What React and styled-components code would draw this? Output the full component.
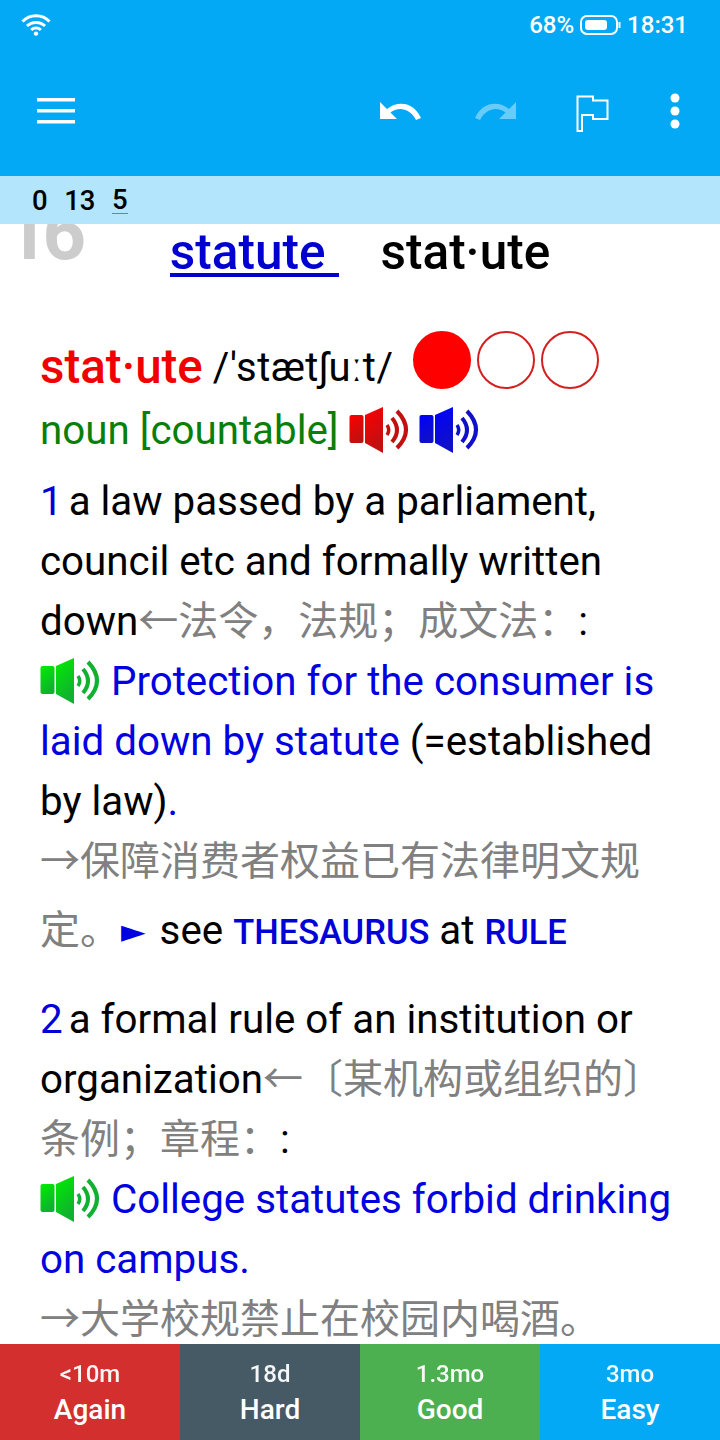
import React from 'react';
import styled, { createGlobalStyle } from 'styled-components';

const GlobalStyle = createGlobalStyle`
    html, body {
        margin: 0;
        padding: 0;
        background: #fff;
        font-family: Roboto, "Noto Sans CJK SC", sans-serif;
    }
`;

const Page = styled.div`
    width: 720px;
    height: 1440px;
    display: flex;
    flex-direction: column;
    overflow: hidden;
    background: #fff;
`;

const Header = styled.header`
    height: 176px;
    background: #03a9f4;
    flex-shrink: 0;
    color: #fff;
`;

const StatusBar = styled.div`
    height: 50px;
    display: flex;
    align-items: center;
    justify-content: space-between;
    padding: 0 32px 0 21px;
    font-size: 24px;
    font-weight: 500;
`;

const StatusRight = styled.div`
    display: flex;
    align-items: center;
    gap: 6px;
`;

const Toolbar = styled.div`
    height: 122px;
    display: flex;
    align-items: center;
    padding: 0 36px 0 37px;
`;

const ToolIcon = styled.svg`
    display: block;
    flex-shrink: 0;
    margin-left: ${p => p.$gap || 0}px;
    margin-top: ${p => p.$top || 0}px;
`;

const Counts = styled.div`
    height: 48px;
    flex-shrink: 0;
    background: #b3e5fc;
    display: flex;
    align-items: center;
    gap: 16.5px;
    padding-left: 32px;
    font-size: 27.5px;
    font-weight: 500;
    color: #000;
    position: relative;
    z-index: 1;
`;

const Due = styled.span`
    border-bottom: ${p => (p.$underline ? '1px solid #35b04a' : 'none')};
    line-height: 27px;
`;

const Content = styled.main`
    flex: 1;
    min-height: 0;
    overflow: hidden;
    position: relative;
    padding: 0 40px 0 40px;
    color: #000;
    font-size: 40.3px;
`;

const CardNumber = styled.div`
    position: absolute;
    left: 5px;
    top: -23px;
    font-size: 76px;
    line-height: 64px;
    font-weight: 700;
    letter-spacing: -6px;
    color: #ccc;
`;

const TitleRow = styled.div`
    height: 56px;
    display: flex;
    justify-content: center;
    align-items: baseline;
    gap: 41px;
    font-size: 49.5px;
    font-weight: 500;
    line-height: 56px;
    margin-bottom: 50px;
`;

const TitleLink = styled.span`
    color: #0000d0;
    border-bottom: 4px solid #0000d0;
    line-height: 42px;
    padding-right: 14px;
`;

const HeadRow = styled.div`
    height: 60px;
    display: flex;
    align-items: center;
    gap: 10px;
`;

const Headword = styled.span`
    color: #f00000;
    font-size: 47.5px;
    font-weight: 500;
    margin-top: 14px;
`;

const Pron = styled.span`
    font-size: 40px;
    letter-spacing: 0.6px;
    margin: 14px 9px 0 0;
`;

const Circles = styled.div`
    display: flex;
    gap: 6px;
`;

const Circle = styled.span`
    width: 58px;
    height: 58px;
    box-sizing: border-box;
    border-radius: 50%;
    border: 2px solid ${p => (p.$filled ? '#f00' : '#d32020')};
    background: ${p => (p.$filled ? '#f00' : 'transparent')};
`;

const PosRow = styled.div`
    height: 60px;
    display: flex;
    align-items: center;
    gap: 10px;
    margin: 10px 0 12px;
    color: #087f08;
`;

const Sense = styled.div`
    line-height: 60px;
    margin-top: ${p => p.$before || 0}px;
`;

const Num = styled.span`
    color: #0000d8;
    margin-right: 6px;
`;

const Zh = styled.span`
    color: #808080;
    font-family: "Noto Sans CJK SC", sans-serif;
    font-size: 40px;
    line-height: 1;
`;

const Example = styled.span`
    color: #0000e0;
`;

const Xref = styled.span`
    color: #0000d8;
    font-size: 34.5px;
    font-weight: 500;
`;

const Pointer = styled.span`
    color: #0000e0;
    font-family: "DejaVu Sans", sans-serif;
    font-size: 32px;
    line-height: 1;
    margin: 0 14px 0 1px;
    vertical-align: 2px;
`;

const TallLine = styled.div`
    height: 78px;
    line-height: 78px;
`;

const Speaker = styled.svg`
    display: ${p => (p.$inline ? 'inline-block' : 'block')};
    vertical-align: -9px;
    margin-right: ${p => (p.$inline ? 11 : 0)}px;
    filter: blur(0.7px);
`;

const AnswerBar = styled.footer`
    height: 96px;
    flex-shrink: 0;
    display: grid;
    grid-template-columns: repeat(4, 1fr);
`;

const Answer = styled.button`
    border: 0;
    padding: 14px 0 0;
    margin: 0;
    background: ${p => p.$bg};
    color: #fff;
    font-family: inherit;
    display: flex;
    flex-direction: column;
    align-items: center;
    font-weight: 500;
    span {
        font-size: 24px;
        line-height: 32px;
        opacity: 0.95;
    }
    strong {
        font-size: 28px;
        line-height: 40px;
        font-weight: 500;
    }
`;

function Wifi() {
    return (
        <svg width="30" height="22" viewBox="0 0 30 22" fill="none" stroke="#fff" strokeWidth="3">
            <path d="M1.5 7.5a19 19 0 0 1 27 0" />
            <path d="M6 12a13 13 0 0 1 18 0" />
            <path d="M10.2 16a7 7 0 0 1 9.6 0" />
            <circle cx="15" cy="19.6" r="2.2" fill="#fff" stroke="none" />
        </svg>
    );
}

function Battery() {
    return (
        <svg width="41" height="20" viewBox="0 0 41 20" fill="none">
            <rect x="1" y="1" width="36" height="18" rx="6" stroke="#fff" strokeWidth="2" />
            <rect x="5" y="5" width="22" height="10" rx="3" fill="#fff" />
            <path d="M39.5 7v6" stroke="#fff" strokeWidth="2" />
        </svg>
    );
}

function SpeakerIcon({ id, light, dark, inline }) {
    return (
        <Speaker $inline={inline} width="60" height="46" viewBox="0 0 60 46" fill="none">
            <defs>
                <linearGradient id={id} x1="0" y1="0" x2="0.4" y2="1">
                    <stop offset="0" stopColor={light} />
                    <stop offset="1" stopColor={dark} />
                </linearGradient>
            </defs>
            <rect x="0.5" y="8" width="14" height="28" rx="2" fill={`url(#${id})`} />
            <path d="M16 8 L34 0 V46 L16 36 Z" fill={`url(#${id})`} />
            <path d="M38 18 Q41.5 23 38 28" stroke={dark} strokeWidth="3.5" />
            <path d="M43 11 Q53 23 43 35" stroke={dark} strokeWidth="4" />
            <path d="M48 4 Q66 23 48 41" stroke={dark} strokeWidth="4" />
        </Speaker>
    );
}

const answers = [
    { bg: '#d32f2f', time: '<10m', label: 'Again' },
    { bg: '#455a64', time: '18d', label: 'Hard' },
    { bg: '#4caf50', time: '1.3mo', label: 'Good' },
    { bg: '#03a9f4', time: '3mo', label: 'Easy' },
];

// fullwidth punctuation written as escapes
const glossOne = '\u2190\u6CD5\u4EE4\uFF0C\u6CD5\u89C4\uFF1B\u6210\u6587\u6CD5\uFF1A';
const glossTwo = '\u2190\u3014\u67D0\u673A\u6784\u6216\u7EC4\u7EC7\u7684\u3015\u6761\u4F8B\uFF1B\u7AE0\u7A0B\uFF1A';

function App() {
    return (
        <Page>
            <GlobalStyle />
            <Header>
                <StatusBar>
                    <Wifi />
                    <StatusRight>
                        <span>68%</span>
                        <Battery />
                        <span>18:31</span>
                    </StatusRight>
                </StatusBar>
                <Toolbar>
                    <ToolIcon width="38" height="26" viewBox="0 0 38 26" fill="#fff">
                        <rect y="0" width="38" height="3.5" />
                        <rect y="11" width="38" height="3.5" />
                        <rect y="22" width="38" height="3.5" />
                    </ToolIcon>
                    <ToolIcon $gap={305} width="41" height="20" viewBox="0 0 41 20" fill="#fff">
                        <path d="M0 1 L0 18 L17 18 L10.5 11.5 C18 5.5 30 7 36 19 L41 17 C34 1 18 -1 7 8 Z" />
                    </ToolIcon>
                    <ToolIcon $gap={54} width="41" height="20" viewBox="0 0 41 20" fill="#fff" opacity="0.4">
                        <path d="M41 1 L41 18 L24 18 L30.5 11.5 C23 5.5 11 7 5 19 L0 17 C7 1 23 -1 34 8 Z" />
                    </ToolIcon>
                    <ToolIcon $gap={60} $top={4} width="33" height="37" viewBox="0 0 33 37" fill="none" stroke="#fff" strokeWidth="2">
                        <path d="M1.5 36 V1.5 H17 V5.5 H31.5 V24 H17 V20 H6 V36 Z" />
                    </ToolIcon>
                    <ToolIcon $gap={61} width="10" height="36" viewBox="0 0 10 36" fill="#fff">
                        <circle cx="5" cy="5" r="4.5" />
                        <circle cx="5" cy="18" r="4.5" />
                        <circle cx="5" cy="31" r="4.5" />
                    </ToolIcon>
                </Toolbar>
            </Header>
            <Counts>
                <span>0</span>
                <span>13</span>
                <Due $underline>5</Due>
            </Counts>
            <Content>
                <CardNumber>16</CardNumber>
                <TitleRow>
                    <TitleLink>statute</TitleLink>
                    <span>stat·ute</span>
                </TitleRow>
                <HeadRow>
                    <Headword>stat·ute</Headword>
                    <Pron>/'stætʃuːt/</Pron>
                    <Circles>
                        <Circle $filled />
                        <Circle />
                        <Circle />
                    </Circles>
                </HeadRow>
                <PosRow>
                    noun [countable]
                    <SpeakerIcon id="spRed" light="#ff0000" dark="#c01010" />
                    <SpeakerIcon id="spBlue" light="#0000ff" dark="#1010c8" />
                </PosRow>
                <Sense>
                    <Num>1</Num>a law passed by a parliament, council etc and formally written
                    down<Zh>{glossOne}</Zh>:
                    <br />
                    <SpeakerIcon id="spGreen1" light="#00ee00" dark="#10b030" inline />
                    <Example>Protection for the consumer is laid down by statute</Example> (=established by
                    law)<Example>.</Example>
                    <br />
                    <Zh>→保障消费者权益已有法律明文规</Zh>
                </Sense>
                <TallLine>
                    <Zh>定。</Zh>
                    <Pointer>►</Pointer>
                    see <Xref>THESAURUS</Xref> at <Xref>RULE</Xref>
                </TallLine>
                <Sense $before={20}>
                    <Num>2</Num>a formal rule of an institution or organization
                    <Zh>{glossTwo}</Zh>:
                    <br />
                    <SpeakerIcon id="spGreen2" light="#00ee00" dark="#10b030" inline />
                    <Example>College statutes forbid drinking on campus.</Example>
                    <br />
                    <Zh>→大学校规禁止在校园内喝酒。</Zh>
                </Sense>
            </Content>
            <AnswerBar>
                {answers.map(a => (
                    <Answer key={a.label} $bg={a.bg}>
                        <span>{a.time}</span>
                        <strong>{a.label}</strong>
                    </Answer>
                ))}
            </AnswerBar>
        </Page>
    );
}

export default App;
